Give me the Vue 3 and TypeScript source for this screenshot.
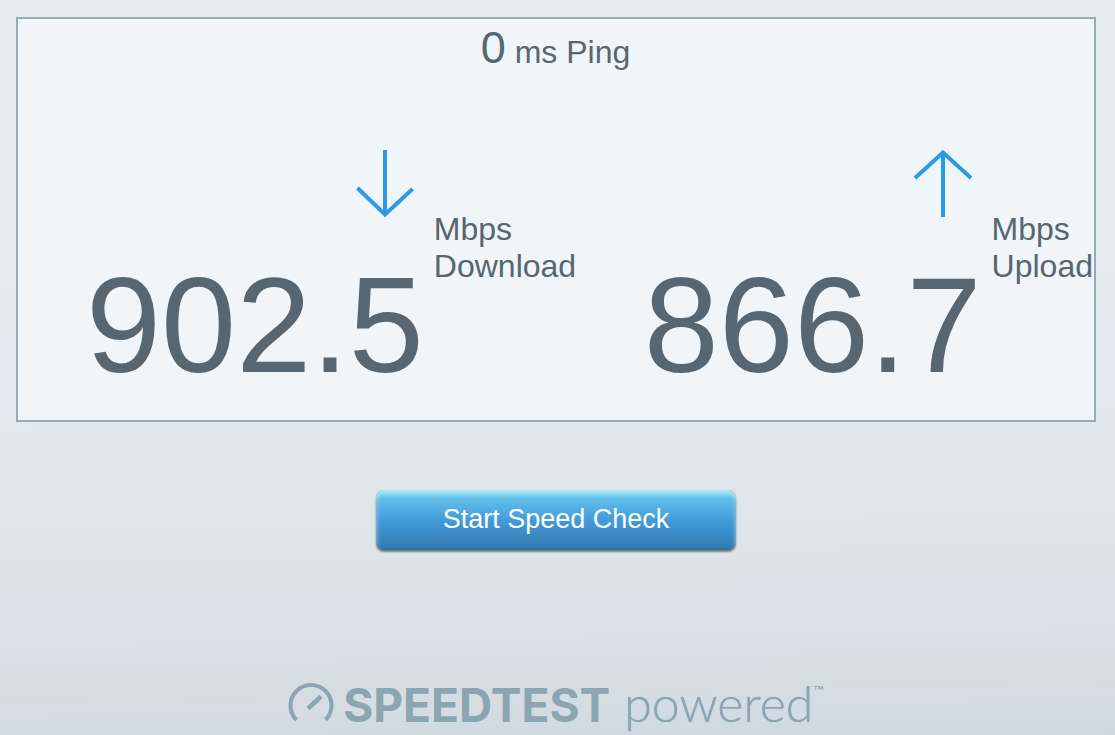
<script setup lang="ts">
import { ref } from 'vue'

interface Reading {
  id: string
  value: string
  label: string
  arrow: string
}

const ping = ref(0)
const readings = ref<Reading[]>([
  { id: 'download', value: '902.5', label: 'Download', arrow: 'M29 0V65M1.5 38L29 64.5L56.5 39' },
  { id: 'upload', value: '866.7', label: 'Upload', arrow: 'M29 67V2M1 28L29 2.5L57 28' },
])
</script>

<template>
  <main class="page">
    <section class="panel">
      <p class="ping"><span class="ping-value">{{ ping }}</span> ms Ping</p>
      <div class="readings">
        <div v-for="r in readings" :key="r.id" class="reading">
          <div class="measure">
            <svg class="arrow" viewBox="0 0 58 67" aria-hidden="true">
              <path :d="r.arrow" />
            </svg>
            <span class="value">{{ r.value }}</span>
          </div>
          <div class="unit">Mbps<br />{{ r.label }}</div>
        </div>
      </div>
    </section>

    <button class="start" type="button">Start Speed Check</button>

    <footer class="brand">
      <svg class="gauge" viewBox="0 0 46 39" aria-hidden="true">
        <path d="M8.5 37A20.5 20.5 0 1 1 37.5 37" stroke-width="4" />
        <path d="M20 25.5L33 13.5" stroke-width="4.5" />
      </svg>
      <span class="name">SPEEDTEST</span>
      <span class="powered">powered</span>
      <span class="tm">™</span>
    </footer>
  </main>
</template>

<style>
body {
  margin: 0;
}
</style>

<style scoped>
.page {
  box-sizing: border-box;
  min-height: 100vh;
  padding: 17px 19px 0 16px;
  display: flex;
  flex-direction: column;
  align-items: center;
  font-family: "Liberation Sans", Arial, sans-serif;
  color: #586671;
  background: linear-gradient(179deg, #e5edef 0%, #e4ecef 38%, #e2e9f1 49%, #e1e8ed 59%, #e0e8ea 63%, #dfe6ec 68%, #dde4e8 76%, #dce3ea 81%, #d8dfe6 88%, #d5dde1 92%, #d5dce3 95%, #cfd8df 100%);
}

.panel {
  box-sizing: border-box;
  align-self: stretch;
  padding: 2px 1px 27px 68px;
  border: 2px solid #98abb5;
  background: #eff5f8;
}

.ping {
  margin: 0 68px 71px 0;
  text-align: center;
  font-size: 32px;
  line-height: 54px;
}

.ping-value {
  font-size: 45px;
}

.readings {
  display: flex;
  justify-content: space-between;
}

.reading {
  display: flex;
  gap: 10px;
}

.measure {
  display: flex;
  flex-direction: column;
  align-items: flex-end;
  gap: 41px;
}

.arrow {
  width: 58px;
  height: 67px;
  margin-right: 10px;
  fill: none;
  stroke: #2b9ae8;
  stroke-width: 4;
}

.value {
  font-size: 135px;
  line-height: 135px;
}

.unit {
  padding-top: 61px;
  font-size: 32px;
  line-height: 37px;
}

.start {
  width: 360px;
  height: 60px;
  margin: 68px 0 133px;
  padding: 0 0 2px;
  border: 0;
  border-radius: 8px;
  font: 27px "Liberation Sans", Arial, sans-serif;
  color: #fff;
  background: linear-gradient(#66c5ec 8%, #429ad8 52%, #3279ac 100%);
  box-shadow: inset 0 4px 4px #b5e5f6, inset 0 -1px 2px #286894, 0 2px 2px #777b80;
  cursor: pointer;
}

.brand {
  display: flex;
  align-items: baseline;
  color: #8ba5b2;
  line-height: 40px;
}

.gauge {
  width: 46px;
  height: 39px;
  margin-right: 9px;
  fill: none;
  stroke: currentColor;
}

.name {
  font-family: Inter, sans-serif;
  font-size: 46px;
  font-weight: 700;
}

.powered {
  margin-left: 14px;
  font-family: Lato, sans-serif;
  font-size: 50px;
  font-weight: 300;
  text-shadow: 0 0 1px currentColor;
}

.tm {
  align-self: flex-start;
  font-family: Lato, sans-serif;
  font-size: 14px;
  line-height: 16px;
}
</style>
